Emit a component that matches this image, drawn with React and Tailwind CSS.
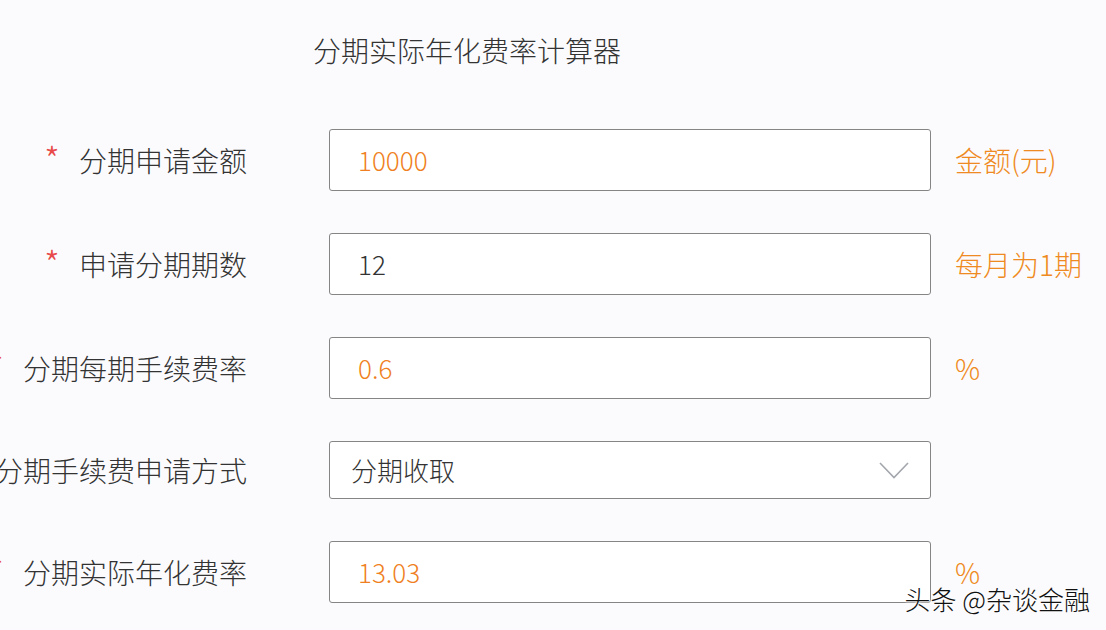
import React from "react";

const rows = [
  { label: "分期申请金额", value: "10000", valueColor: "text-[#ef7f22]", unit: "金额(元)" },
  { label: "申请分期期数", value: "12", valueColor: "text-[#333333]", unit: "每月为1期" },
  { label: "分期每期手续费率", value: "0.6", valueColor: "text-[#ef7f22]", unit: "%" },
  { label: "分期手续费申请方式", select: "分期收取" },
  { label: "分期实际年化费率", value: "13.03", valueColor: "text-[#ef7f22]", unit: "%" },
];

const Row = ({ row }) => {
  return (
    <div className="flex items-center">
      <div className="w-[247px] shrink-0 flex justify-end items-center whitespace-nowrap">
        <span className="text-[36px] leading-none text-[#e84a4a] mr-[19px] mb-1">*</span>
        <span className="text-[28px] leading-none text-[#333333]">{row.label}</span>
      </div>
      {row.select ? (
        <div className="ml-[82px] w-[602px] h-[58px] shrink-0 border border-[#858585] rounded-[3px] bg-white flex items-center justify-between pl-[21px] pr-[21px]">
          <span className="text-[26px] leading-none text-[#333333]">{row.select}</span>
          <svg width="30" height="17" viewBox="0 0 30 17" fill="none">
            <polyline points="1,1 15,15.5 29,1" stroke="#a3a7ad" strokeWidth="1.6" />
          </svg>
        </div>
      ) : (
        <div className="ml-[82px] w-[602px] h-[62px] shrink-0 border border-[#858585] rounded-[3px] bg-white flex items-center pl-[28px]">
          <span className={"text-[26px] leading-none " + row.valueColor}>{row.value}</span>
        </div>
      )}
      {row.unit && (
        <span className="ml-[24px] text-[28px] leading-none text-[#ef8a22] whitespace-nowrap">{row.unit}</span>
      )}
    </div>
  );
};

const App = () => {
  return (
    <div
      className="relative w-[1106px] h-[630px] overflow-hidden bg-[#fbfbfd] font-light"
      style={{ fontFamily: '"Noto Sans CJK SC", "Noto Sans", sans-serif' }}
    >
      <h1 className="pl-[313px] pt-[36px] text-[28px] leading-none font-light text-[#333333]">
        分期实际年化费率计算器
      </h1>
      <div className="mt-[65px] flex flex-col gap-[42px]">
        {rows.map((row) => (
          <Row key={row.label} row={row} />
        ))}
      </div>
      <div className="absolute right-[16px] bottom-[18px] text-[26px] leading-none text-[#111111] whitespace-nowrap [text-shadow:0_0_2px_#ffffff,0_0_2px_#ffffff,0_0_3px_#ffffff]">
        头条 @杂谈金融
      </div>
    </div>
  );
};

export default App;
